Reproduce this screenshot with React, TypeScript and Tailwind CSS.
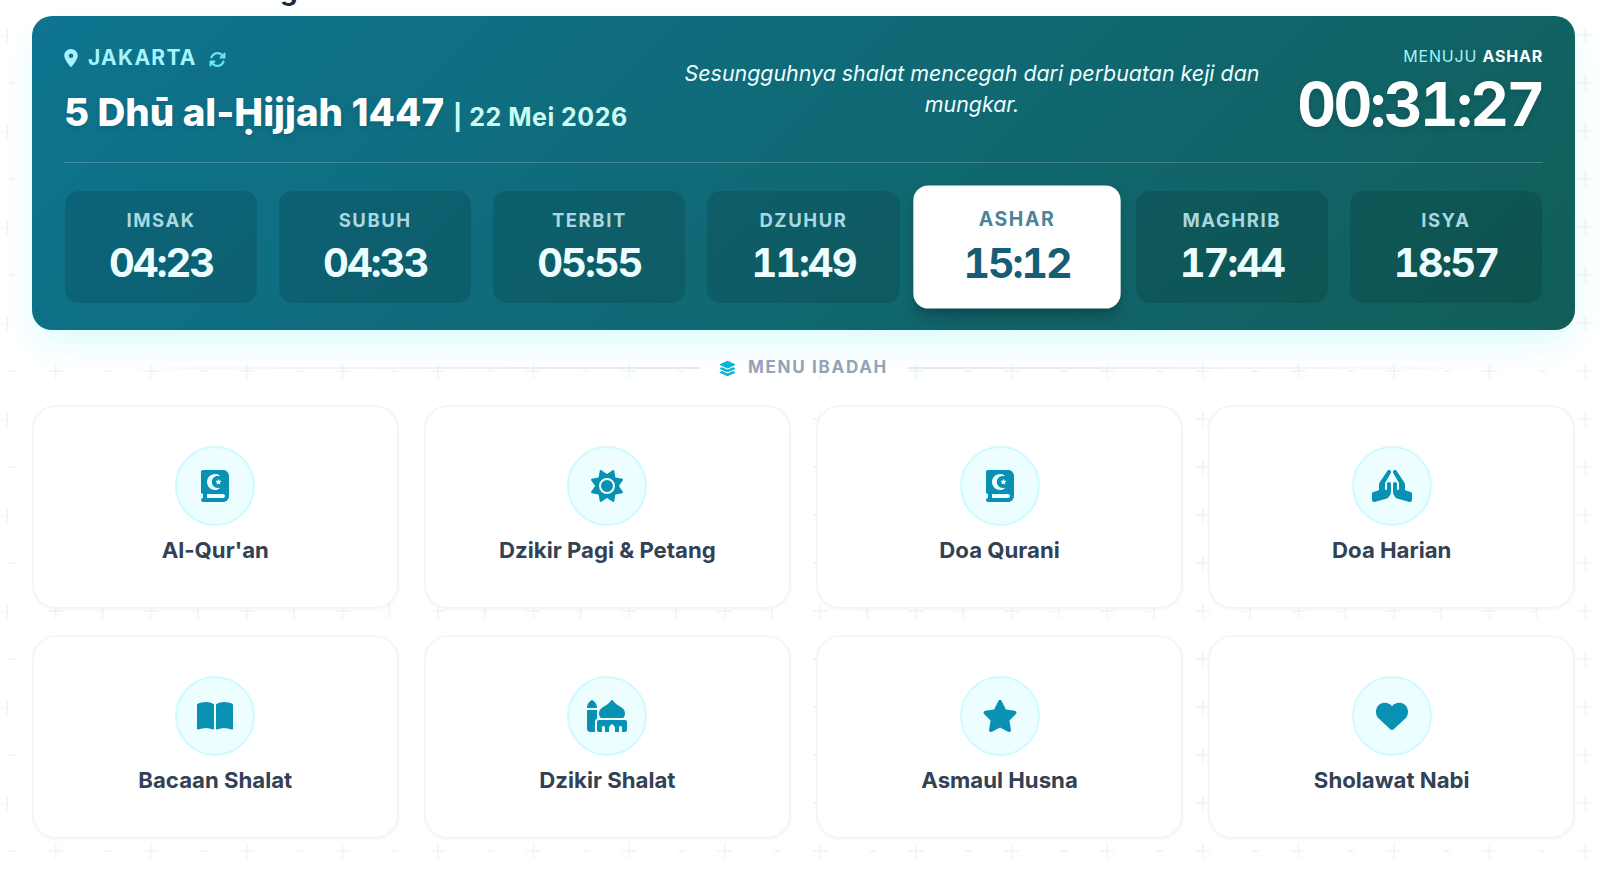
import { FaLocationDot, FaArrowsRotate, FaLayerGroup, FaBookQuran, FaSun, FaHandsPraying, FaBookOpen, FaMosque, FaStar, FaHeart } from "react-icons/fa6";

const prayers = [
  ["IMSAK", "04:23"],
  ["SUBUH", "04:33"],
  ["TERBIT", "05:55"],
  ["DZUHUR", "11:49"],
  ["ASHAR", "15:12"],
  ["MAGHRIB", "17:44"],
  ["ISYA", "18:57"],
];

const menu = [
  ["Al-Qur'an", FaBookQuran, 32],
  ["Dzikir Pagi & Petang", FaSun, 32],
  ["Doa Qurani", FaBookQuran, 32],
  ["Doa Harian", FaHandsPraying, 40],
  ["Bacaan Shalat", FaBookOpen, 36],
  ["Dzikir Shalat", FaMosque, 40],
  ["Asmaul Husna", FaStar, 36],
  ["Sholawat Nabi", FaHeart, 32],
] as const;

function Pattern() {
  return (
    <svg className="absolute inset-0 w-full h-full" aria-hidden="true">
      <defs>
        <pattern id="bgp" x="0" y="35" width="95.6" height="96" patternUnits="userSpaceOnUse">
          <g stroke="#eef3f6" strokeWidth="1.5" fill="none">
            <path d="M55.6 0V7.5M48 0H63" />
            <path d="M55.6 96V88.5M48 96H63" />
            <path d="M7 0V7.5M0 0H7" />
            <path d="M7 96V88.5" />
            <path d="M55.6 40.5V55.5M48 48H63" />
            <path d="M9 48H16" />
          </g>
        </pattern>
      </defs>
      <rect width="100%" height="100%" fill="url(#bgp)" />
    </svg>
  );
}

export default function App() {
  return (
    <div className="relative h-[886px] overflow-hidden bg-white font-['Inter',sans-serif]">
      <Pattern />
      <div className="relative pl-8 pr-[25px]">
        <div className="h-4 overflow-hidden relative">
          <span className="absolute left-[248px] bottom-[12px] text-[28px] leading-none font-bold text-[#1e293b]">g</span>
        </div>
        <section className="rounded-[20px] bg-[linear-gradient(135deg,#0e7490,#115e59)] shadow-[0_16px_32px_-4px_rgba(207,250,254,0.75)] px-8 pt-[29px] h-[314px] text-white">
          <div className="flex items-start h-[118px] border-b border-white/20">
            <div className="w-[580px] shrink-0">
              <div className="flex items-center text-[#a5f3fc] h-[25px] -ml-0.5">
                <FaLocationDot className="text-[18px]" />
                <span className="ml-[8px] text-[21px] leading-none font-bold tracking-[0.06em]">JAKARTA</span>
                <FaArrowsRotate className="ml-[12px] mt-[3px] text-[17px] text-[#67e8f9]" />
              </div>
              <div className="mt-[20px] flex items-baseline whitespace-nowrap">
                <span className="text-[38.5px] leading-[44px] font-extrabold [text-shadow:0_2px_4px_rgba(0,0,0,0.12)]">5 Dhū al-Ḥijjah 1447</span>
                <span className="ml-[9px] text-[25px] font-bold tracking-[0.02em] text-[#ccfbf1]">| 22 Mei 2026</span>
              </div>
            </div>
            <p className="w-[600px] shrink-0 ml-[28px] mt-[13px] text-center italic text-[21.4px] leading-[31px] text-[#ecfeff]">
              Sesungguhnya shalat mencegah dari perbuatan keji dan mungkar.
            </p>
            <div className="ml-auto text-right">
              <div className="mt-px text-[16px] leading-[20px] tracking-[0.05em] text-[#a5f3fc]">
                MENUJU <b className="text-white font-bold">ASHAR</b>
              </div>
              <div className="mt-[8px] text-[60px] leading-[60px] font-bold tabular-nums tracking-[-0.04em] [text-shadow:0_2px_6px_rgba(0,0,0,0.15)]">00:31:27</div>
            </div>
          </div>
          <div className="grid grid-cols-7 gap-[22px] mt-[28px] ml-px mr-px">
            {prayers.map(([name, time]) => {
              const on = name === "ASHAR";
              return (
                <div
                  key={name}
                  className={
                    on
                      ? "h-[114px] -mt-px -translate-x-px rounded-[14px] bg-white scale-[1.08] shadow-lg shadow-black/20 flex flex-col items-center pt-[21px]"
                      : "h-[112px] rounded-[14px] bg-black/[0.12] flex flex-col items-center pt-[18px]"
                  }
                >
                  <div className={on ? "text-[18px] leading-[22px] font-bold tracking-[0.08em] text-[#4f8299]" : "text-[18.5px] leading-[22px] font-bold tracking-[0.085em] text-[#a9d8e0]"}>{name}</div>
                  <div className={on ? "mt-[7px] text-[38px] leading-[44px] font-bold tabular-nums tracking-[-0.05em] text-[#155e75]" : "mt-[10px] text-[40px] leading-[44px] font-bold tabular-nums tracking-[-0.05em] text-[#ecfeff]"}>{time}</div>
                </div>
              );
            })}
          </div>
        </section>

        <div className="flex items-center mt-[28px] h-[20px]">
          <div className="flex-1 h-[2px] bg-gradient-to-r from-transparent to-[#e2e8f0]" />
          <FaLayerGroup className="ml-[20px] text-[17px] text-[#06b6d4]" />
          <span className="ml-[12px] mr-[20px] text-[17px] font-bold tracking-[0.1em] text-[#94a3b8]">MENU IBADAH</span>
          <div className="flex-1 h-[2px] bg-gradient-to-r from-[#e2e8f0] to-transparent" />
        </div>

        <div className="grid grid-cols-4 gap-x-[25.6px] gap-y-[26px] mt-[27px]">
          {menu.map(([label, Icon, size]) => (
            <div key={label} className="h-[204px] rounded-[24px] bg-white border-2 border-[#f3f6f9] shadow-[0_1px_3px_rgba(15,23,42,0.03)] flex flex-col items-center pt-[39px]">
              <div className="w-20 h-20 rounded-full bg-[#ecfeff] border-2 border-[#cffafe] flex items-center justify-center text-[#0891b2]">
                <Icon size={size} />
              </div>
              <div className="mt-[8px] text-[22.2px] leading-[32px] font-bold text-[#334155]">{label}</div>
            </div>
          ))}
        </div>
      </div>
    </div>
  );
}
